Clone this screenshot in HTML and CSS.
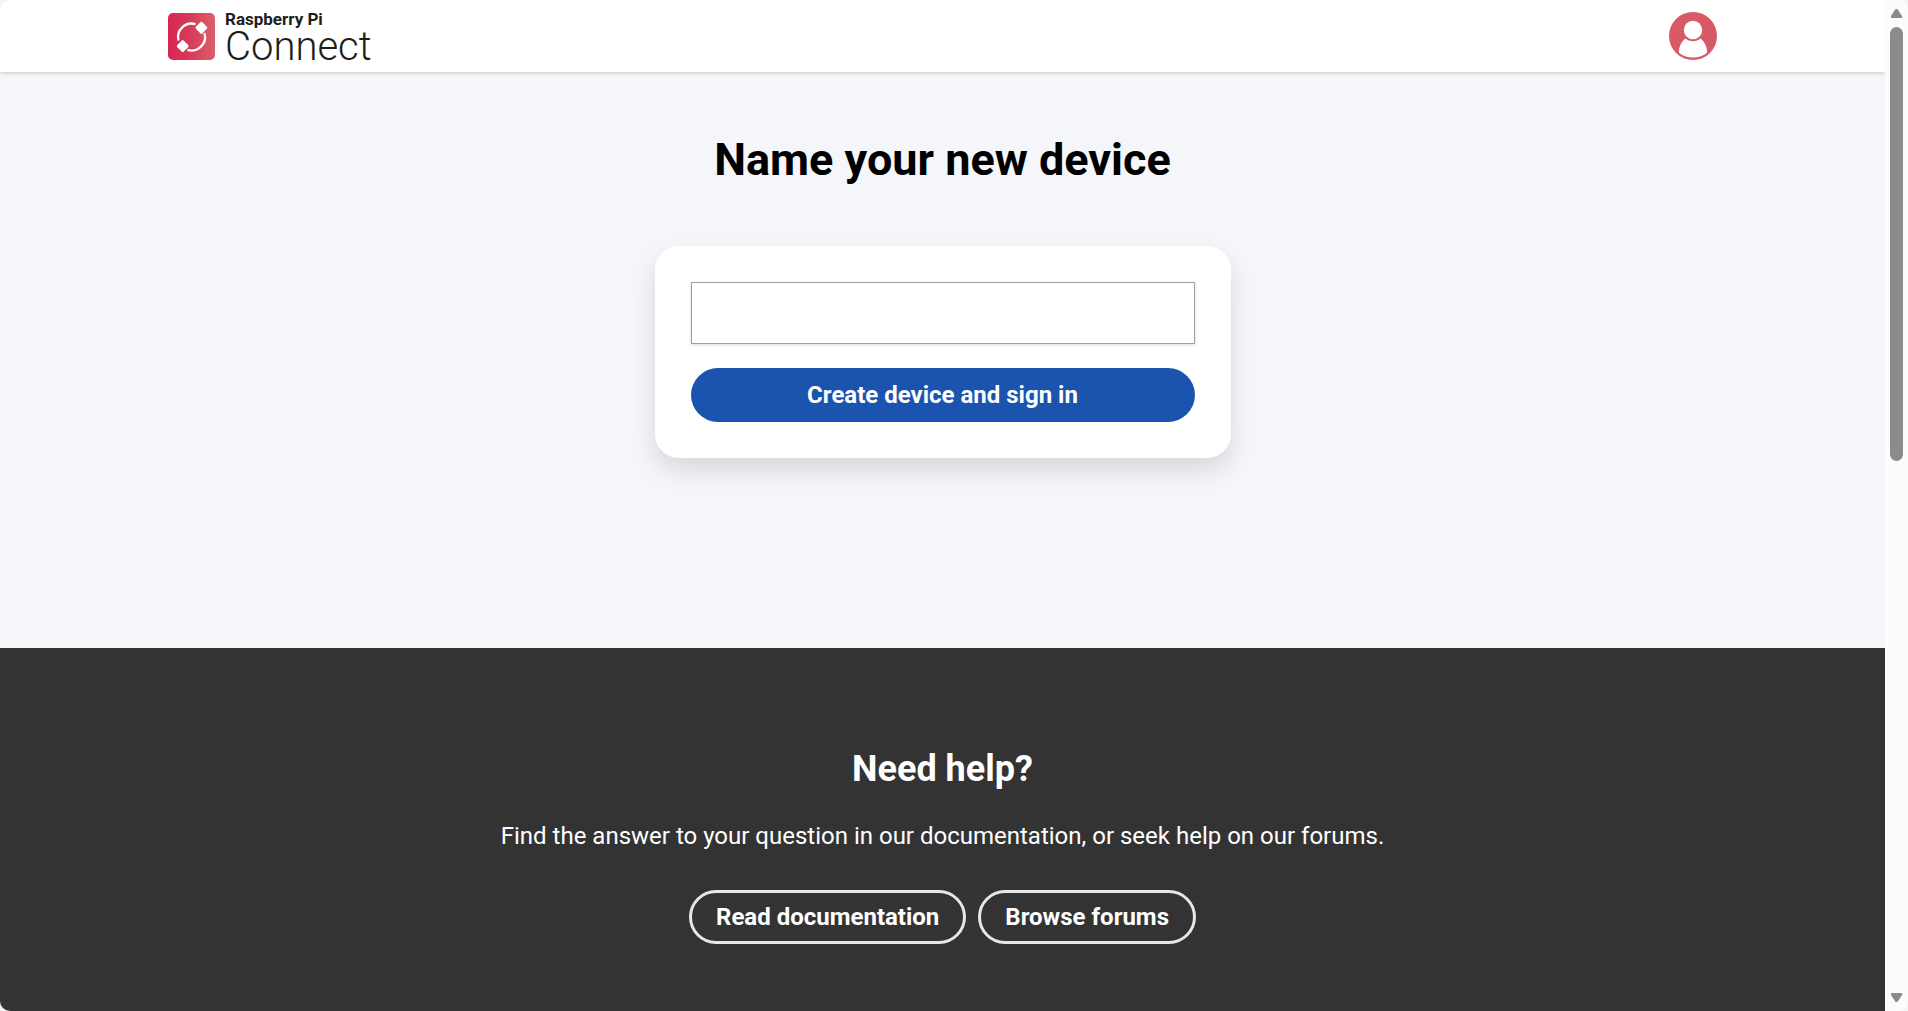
FILE: index.html
```html
<!DOCTYPE html>
<html lang="en">
<head>
    <meta charset="UTF-8">
    <meta name="viewport" content="width=device-width, initial-scale=1.0">
    <title>Name your new device - Raspberry Pi Connect</title>
    <link rel="stylesheet" href="styles.css">
</head>
<body>
    <div class="window">
        <div class="page">

            <!-- Header -->
            <header class="header">
                <div class="header-inner">
                    <a class="brand" href="#">
                        <svg class="brand-icon" viewBox="0 0 47 47" aria-hidden="true">
                            <defs>
                                <linearGradient id="brand-fill" x1="0" y1="0" x2="1" y2="0">
                                    <stop offset="0" stop-color="#d72653"/>
                                    <stop offset="0.45" stop-color="#d83a5a"/>
                                    <stop offset="1" stop-color="#dc5f69"/>
                                </linearGradient>
                            </defs>
                            <rect width="47" height="47" rx="5" fill="url(#brand-fill)"/>
                            <g fill="none" stroke="#fff" stroke-width="2.3">
                                <path d="M27.5 11.2A13.4 13.4 0 0 0 10.6 27.5"/>
                                <path d="M19.5 36.8A13.4 13.4 0 0 0 36.4 20"/>
                            </g>
                            <g fill="#fff">
                                <rect x="28.8" y="10.1" width="9.2" height="9.2" rx="1.5" transform="rotate(45 33.4 14.7)"/>
                                <rect x="10.1" y="28.5" width="9.2" height="9.2" rx="1.5" transform="rotate(45 14.7 33.1)"/>
                            </g>
                        </svg>
                        <span class="brand-text">
                            <span class="brand-owner">Raspberry Pi</span>
                            <span class="brand-name">Connect</span>
                        </span>
                    </a>
                    <button class="avatar" type="button" aria-label="Account">
                        <svg viewBox="0 0 48 48" aria-hidden="true">
                            <circle cx="24" cy="24" r="24" fill="#d85a66"/>
                            <circle cx="24" cy="18" r="9.2" fill="#fff"/>
                            <path d="M16.6 26.6C12.7 29.2 10 34.4 9.8 40.6C13.4 44 18.4 45.6 24 45.6S34.6 44 38.2 40.6C38 34.4 35.3 29.2 31.4 26.6C29.4 28.4 26.8 29.3 24 29.3S18.6 28.4 16.6 26.6Z" fill="#fff"/>
                        </svg>
                    </button>
                </div>
            </header>

            <!-- Device form -->
            <main class="main">
                <h1>Name your new device</h1>
                <form class="card">
                    <input type="text" id="device-name" name="device-name" aria-label="Device name">
                    <button type="submit" class="btn">Create device and sign in</button>
                </form>
            </main>

            <!-- Help -->
            <footer class="help">
                <h2>Need help?</h2>
                <p>Find the answer to your question in our documentation, or seek help on our forums.</p>
                <div class="help-links">
                    <a class="btn-outline" href="#">Read documentation</a>
                    <a class="btn-outline" href="#">Browse forums</a>
                </div>
            </footer>
        </div>

        <div class="scrollbar" aria-hidden="true">
            <span class="arrow-up"></span>
            <div class="track">
                <div class="thumb"></div>
            </div>
            <span class="arrow-down"></span>
        </div>
    </div>
</body>
</html>
```

FILE: styles.css
```css
* {
    box-sizing: border-box;
}

body {
    margin: 0;
    background: #f4f4f4;
    color: #000;
    font-family: Roboto, "Liberation Sans", sans-serif;
    font-size: 24px;
    line-height: 36px;
}

h1, h2, p {
    margin: 0;
}

.window {
    display: flex;
    height: 100vh;
    border-radius: 10px;
    overflow: hidden;
}

.page {
    flex: 1;
    display: flex;
    flex-direction: column;
    background: #f4f6fa;
    overflow: hidden;
}

/* Header */
.header {
    position: relative;
    background: #fff;
    box-shadow: 0 1px 4px rgba(0, 0, 0, 0.2);
}

.header-inner {
    display: flex;
    justify-content: space-between;
    align-items: center;
    max-width: 1549px;
    height: 72px;
    margin: 0 auto;
}

.brand {
    display: flex;
    align-items: center;
    gap: 10px;
    color: #1d1d1b;
    text-decoration: none;
}

.brand-icon {
    width: 47px;
    height: 47px;
}

.brand-text {
    display: flex;
    flex-direction: column;
    padding-top: 4px;
}

.brand-owner {
    font-size: 17px;
    font-weight: 700;
    line-height: 18px;
}

.brand-name {
    font-size: 40px;
    font-weight: 300;
    line-height: 38px;
}

.avatar {
    width: 48px;
    height: 48px;
    padding: 0;
    border: none;
    border-radius: 50%;
    background: none;
    cursor: pointer;
}

.avatar svg {
    display: block;
}

/* Device form */
.main {
    display: flex;
    flex-direction: column;
    align-items: center;
    gap: 58px;
    padding: 60px 36px 190px;
}

h1 {
    font-size: 45px;
    font-weight: 700;
    line-height: 56px;
}

.card {
    display: flex;
    flex-direction: column;
    gap: 24px;
    width: 100%;
    max-width: 576px;
    padding: 36px;
    background: #fff;
    border-radius: 24px;
    box-shadow: 0 12px 24px rgba(0, 0, 0, 0.12);
}

.card input {
    width: 100%;
    height: 62px;
    padding: 12px;
    border: 1px solid #9a9fae;
    border-radius: 0;
    font: inherit;
    box-shadow: 0 1px 3px rgba(0, 0, 0, 0.15);
}

.btn {
    height: 54px;
    border: none;
    border-radius: 27px;
    background: #1a54ae;
    color: #fff;
    font: inherit;
    font-weight: 700;
    cursor: pointer;
}

/* Help */
.help {
    flex: 1;
    display: flex;
    flex-direction: column;
    align-items: center;
    padding: 99px 36px;
    background: #333;
    color: #fff;
    text-align: center;
}

.help h2 {
    margin-bottom: 27px;
    font-size: 36px;
    font-weight: 700;
    line-height: 44px;
}

.help p {
    margin-bottom: 36px;
}

.help-links {
    display: flex;
    gap: 12px;
}

.btn-outline {
    padding: 6px 24px;
    border: 3px solid #e6e6eb;
    border-radius: 27px;
    color: #fff;
    font-weight: 700;
    text-decoration: none;
}

/* Scrollbar */
.scrollbar {
    display: flex;
    flex-direction: column;
    align-items: center;
    width: 23px;
    padding: 9px 0;
    background: #fcfcfc;
}

.track {
    flex: 1;
    padding: 9px 0;
}

.thumb {
    width: 13px;
    height: 45.4%;
    border-radius: 7px;
    background: #8b8b8b;
}

.arrow-up, .arrow-down {
    width: 12px;
    height: 9px;
    background: #8b8b8b;
}

.arrow-up {
    clip-path: polygon(42% 0, 58% 0, 100% 85%, 92% 100%, 8% 100%, 0 85%);
}

.arrow-down {
    clip-path: polygon(8% 0, 92% 0, 100% 15%, 58% 100%, 42% 100%, 0 15%);
}
```
